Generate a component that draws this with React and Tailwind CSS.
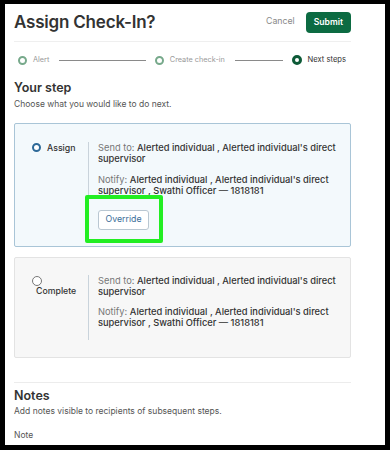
const font = { fontFamily: 'Inter, "Liberation Sans", sans-serif' }

const steps = [
  { label: 'Alert', done: true },
  { label: 'Create check-in', done: true },
  { label: 'Next steps', done: false },
]

function Stepper() {
  return (
    <div className="mt-[13px] flex h-[10px] items-center pl-[4px] pr-[5px]">
      {steps.map((step, i) => (
        <div key={step.label} className={i < steps.length - 1 ? 'flex flex-1 items-center' : 'flex items-center'}>
          <span
            className={
              step.done
                ? 'h-[9px] w-[9px] shrink-0 rounded-full border-[2.5px] border-[#77a98b] bg-white'
                : 'h-[10px] w-[10px] shrink-0 rounded-full border-[3px] border-[#0d5a37] bg-white'
            }
          />
          <span className={step.done ? 'ml-[6px] text-[7.3px] text-[#9a9a9a]' : 'ml-[6px] text-[7.6px] text-[#333]'}>
            {step.label}
          </span>
          {i < steps.length - 1 && <span className="ml-[10px] mr-[9px] h-px flex-1 bg-[#8a8a8a]" />}
        </div>
      ))}
    </div>
  )
}

function Recipients() {
  return (
    <div className="text-[9.3px] leading-[11px]">
      <p>
        <span className="text-[#777]">Send to: </span>
        <span className="font-medium text-[#333]">Alerted individual , Alerted individual's direct supervisor</span>
      </p>
      <p className="mt-[9.5px]">
        <span className="text-[#777]">Notify: </span>
        <span className="font-medium text-[#333]">
          Alerted individual , Alerted individual's direct supervisor , Swathi Officer — 1818181
        </span>
      </p>
    </div>
  )
}

export default function App() {
  return (
    <div className="h-[450px] w-[390px] bg-black pb-[5px] pl-[5px] pr-[5px] pt-[4px]" style={font}>
      <div className="h-full overflow-hidden bg-white pl-[9px] pr-[34px] pt-[7px]">
        <div className="flex h-[22px] items-center justify-between">
          <h1 className="text-[17px] font-semibold leading-[22px] tracking-[-0.2px] text-[#333]">Assign Check-In?</h1>
          <div className="flex items-center gap-[11px]">
            <button className="text-[8.75px] text-[#888]">Cancel</button>
            <button className="h-[21px] rounded-[4px] bg-[#0c6b42] px-[8px] text-[8.6px] font-semibold text-white">
              Submit
            </button>
          </div>
        </div>
        <div className="mt-[8px] h-px bg-[#efefef]" />
        <Stepper />

        <h2 className="mt-[15px] text-[12.5px] font-semibold leading-[16px] text-[#333]">Your step</h2>
        <p className="mt-[2px] text-[8.5px] leading-[12px] text-[#555]">Choose what you would like to do next.</p>

        <div className="relative mt-[13px] flex rounded-[2px] border border-[#a9c5d7] bg-[#f3f9fc] pb-[16px] pl-[17px] pr-[8px] pt-[18px]">
          <div className="flex w-[56px] shrink-0 items-start gap-[6px] pt-[1px]">
            <span className="h-[9px] w-[9px] shrink-0 rounded-full border-[2.2px] border-[#2e6a98] bg-white" />
            <span className="text-[8.75px] font-medium leading-[10px] text-[#333]">Assign</span>
          </div>
          <div className="flex-1 border-l border-[#c9d3db] pl-[9px]">
            <Recipients />
            <button className="mt-[14px] h-[20px] rounded-[3px] border border-[#b9c7d2] bg-white px-[6.5px] text-[8.75px] text-[#3a6d98]">
              Override
            </button>
          </div>
          <div className="absolute left-[70px] top-[71px] h-[48px] w-[78px] rounded-[2px] border-[4px] border-[#22ee22]" />
        </div>

        <div className="mt-[10px] flex rounded-[2px] border border-[#e3e3e3] bg-[#f7f7f7] pb-[17px] pl-[17px] pr-[8px] pt-[17px]">
          <div className="w-[56px] shrink-0 pt-[1px]">
            <span className="block h-[10px] w-[10px] rounded-full border border-[#777] bg-white" />
            <span className="ml-[4px] block text-[8.75px] font-medium leading-[11px] text-[#333]">Complete</span>
          </div>
          <div className="flex-1 border-l border-[#c9d3db] pb-[12px] pl-[9px]">
            <Recipients />
          </div>
        </div>

        <div className="mt-[24px] h-px bg-[#ececec]" />
        <h2 className="mt-[5px] text-[12.5px] font-semibold leading-[16px] text-[#333]">Notes</h2>
        <p className="mt-[2px] text-[8.5px] leading-[11px] text-[#555]">Add notes visible to recipients of subsequent steps.</p>
        <p className="mt-[13px] text-[8.5px] leading-[11px] text-[#555]">Note</p>
      </div>
    </div>
  )
}
